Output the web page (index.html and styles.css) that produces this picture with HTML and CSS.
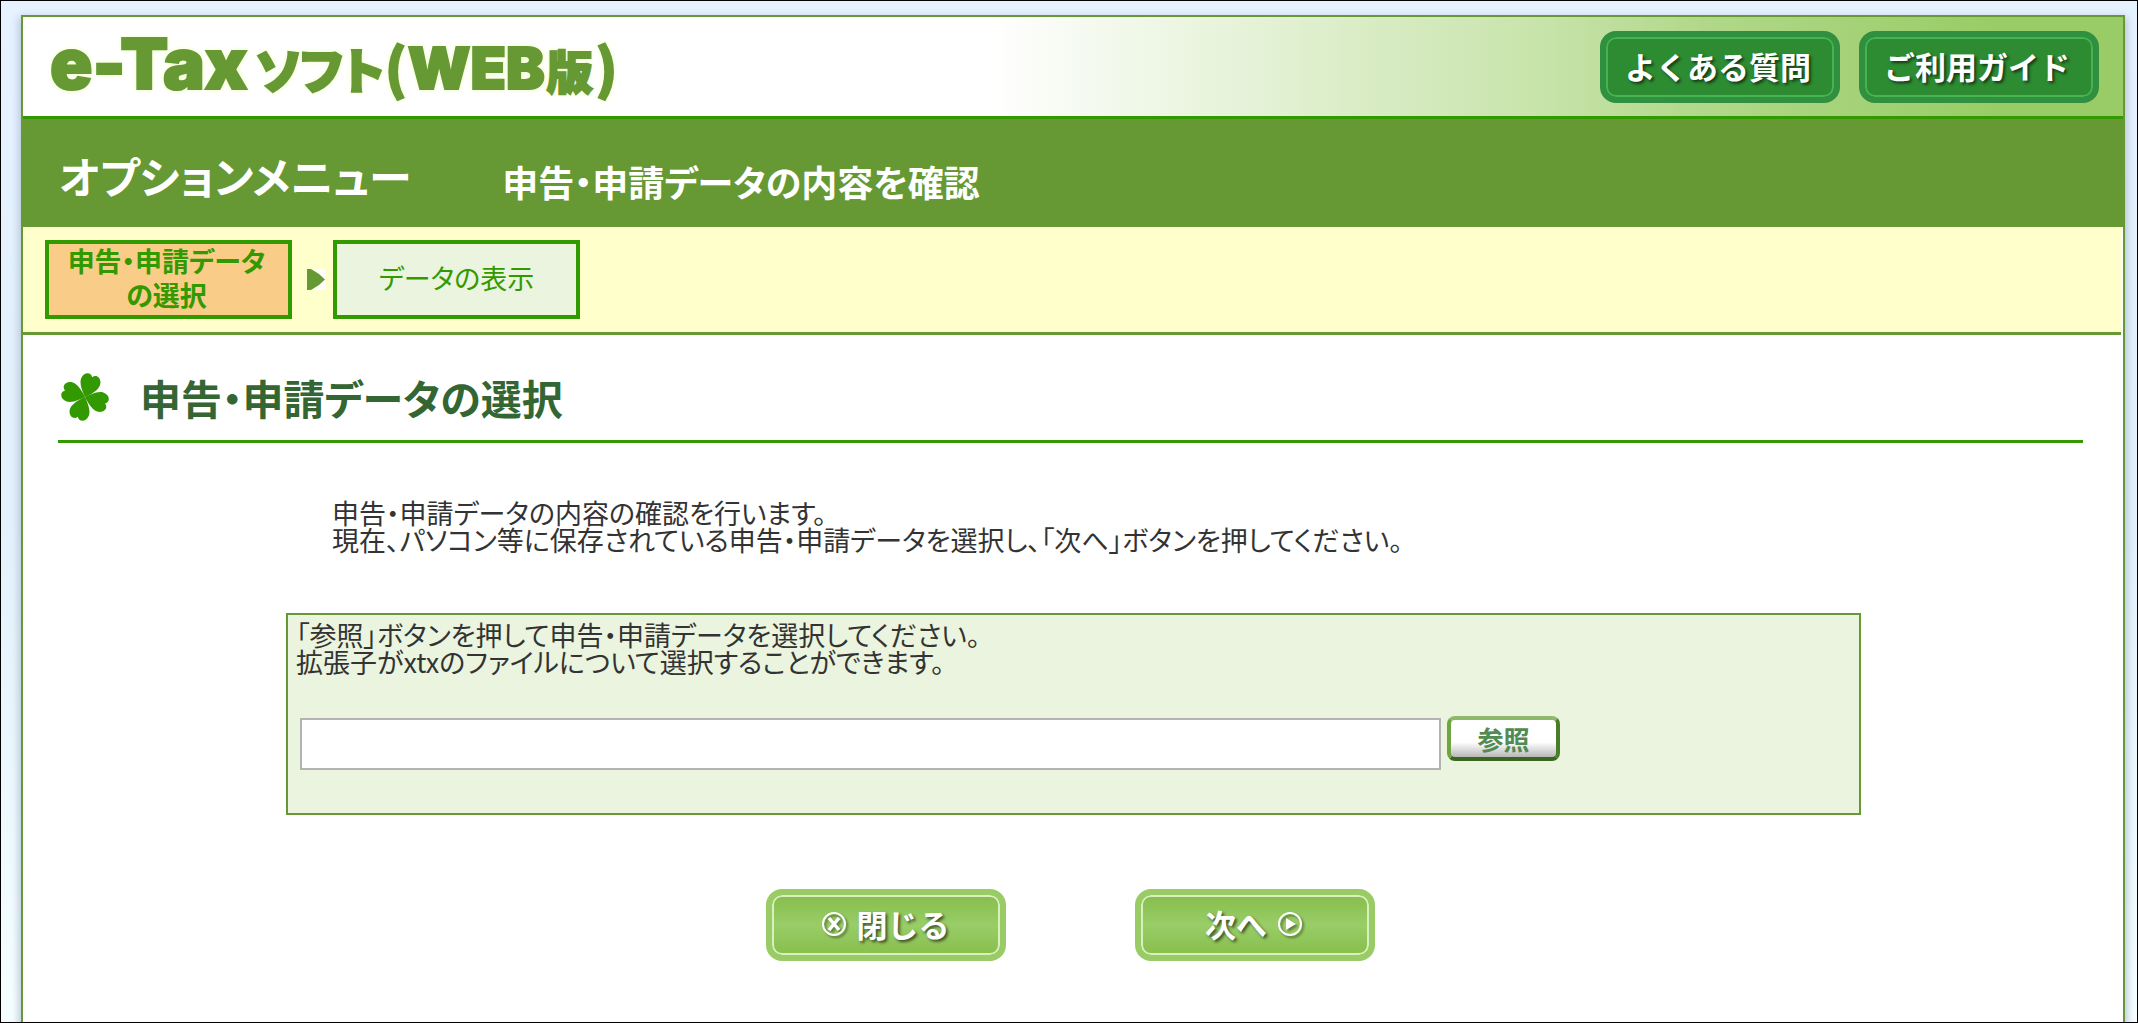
FILE: index.html
```html
<!DOCTYPE html>
<html lang="ja">
<head>
<meta charset="utf-8">
<title>e-Taxソフト(WEB版)</title>
<link rel="stylesheet" href="styles.css">
</head>
<body>
<div class="page">
  <header class="site-header">
    <p class="logo"><span class="logo-tax">e-Tax</span><span class="logo-kana">ソフト</span><span class="logo-paren">(</span><span class="logo-web">WEB</span><span class="logo-kanji">版</span><span class="logo-paren">)</span></p>
    <nav class="help">
      <button type="button" class="pill pill-dark">よくある質問</button>
      <button type="button" class="pill pill-dark">ご利用ガイド</button>
    </nav>
  </header>

  <div class="title-bar">
    <p class="menu-name">オプションメニュー</p>
    <h1 class="task-name">申告・申請データの内容を確認</h1>
  </div>

  <ol class="steps">
    <li class="step step-current">申告・申請データ<br>の選択</li>
    <li class="arrow" aria-hidden="true"><svg width="18" height="21" viewBox="0 0 18 21"><rect width="18" height="21" fill="#fff"/><path d="M0 0H4L12 5L18 10.500L12 16L4 21H0Z" fill="#693"/></svg></li>
    <li class="step">データの表示</li>
  </ol>

  <main class="content">
    <div class="section-head">
      <svg class="clover" width="50" height="50" viewBox="-25 -25 50 50" aria-hidden="true">
        <defs><path id="leaf" d="M0 0C-3-3-10-10-10-16C-10-23-3-26 0-21C3-26 10-23 10-16C10-10 3-3 0 0Z"/></defs>
        <g fill="#390">
          <use href="#leaf" transform="rotate(20)"/>
          <use href="#leaf" transform="rotate(108)"/>
          <use href="#leaf" transform="rotate(200)"/>
          <use href="#leaf" transform="rotate(288)"/>
        </g>
      </svg>
      <h2 class="section-title">申告・申請データの選択</h2>
    </div>

    <p class="intro">申告・申請データの内容の確認を行います。<br>現在、パソコン等に保存されている申告・申請データを選択し、「次へ」ボタンを押してください。</p>

    <form class="panel">
      <label class="panel-text" for="file">「参照」ボタンを押して申告・申請データを選択してください。<br>拡張子がxtxのファイルについて選択することができます。</label>
      <div class="file-row">
        <input class="file-input" id="file" type="text">
        <button type="button" class="browse">参照</button>
      </div>
    </form>

    <div class="actions">
      <button type="button" class="pill pill-light"><svg class="icon" width="26" height="26" viewBox="0 0 26 26" aria-hidden="true"><circle cx="13" cy="13" r="11" fill="none" stroke="#fff" stroke-width="2"/><path d="M8 7L18 19M18 7L8 19" stroke="#fff" stroke-width="3.500"/></svg>閉じる</button>
      <button type="button" class="pill pill-light">次へ<svg class="icon" width="26" height="26" viewBox="0 0 26 26" aria-hidden="true"><circle cx="13" cy="13" r="11" fill="none" stroke="#fff" stroke-width="2"/><path d="M9 7L19 13L9 19Z" fill="#fff"/></svg></button>
    </div>
  </main>
</div>
</body>
</html>
```
FILE: styles.css
```css
* {
  box-sizing: border-box;
}

body {
  margin: 0;
  min-height: 100vh;
  display: flex;
  padding: 14px 12px 0 20px;
  border: 1px solid #000;
  background: linear-gradient(#e6f2ff, #e2f1fc 50%, #f6ffff);
  color: #333;
  font-family: "Noto Sans CJK JP", sans-serif;
  font-feature-settings: "palt";
  font-size: 27px;
  line-height: 27px;
}

p, h1, h2, ol {
  margin: 0;
  padding: 0;
}

button {
  font-family: inherit;
  cursor: pointer;
}

.page {
  flex: 1;
  border: 2px solid #693;
  border-bottom: 0;
  background: #fff;
  box-shadow: 0 4px 8px 2px #b4c3d8;
}

.site-header {
  display: flex;
  align-items: center;
  justify-content: space-between;
  height: 102px;
  padding: 0 24px 0 27px;
  border-bottom: 3px solid #390;
  background: linear-gradient(90deg, #fff 46%, #c8e4ab 72%, #b1d88a 80%, #9c6 94%, #9c6);
}

.logo {
  display: flex;
  align-items: baseline;
  color: #693;
  font-weight: 900;
  line-height: 72px;
  text-shadow: 0 0 4px #ffc, 0 0 6px #efc;
  -webkit-text-stroke: 2px #693;
}

.logo-tax {
  font-family: Inter, sans-serif;
  font-size: 70px;
}

.logo-kana {
  margin-left: 8px;
  font-size: 49px;
}

.logo-paren {
  margin: 0 1px;
  font-size: 54px;
}

.logo-web {
  font-family: Inter, sans-serif;
  font-size: 58px;
}

.logo-kanji {
  margin: 0 2px;
  font-size: 46px;
}

.help {
  display: flex;
  gap: 19px;
}

.pill {
  display: flex;
  align-items: center;
  justify-content: center;
  gap: 10px;
  width: 240px;
  height: 72px;
  padding: 0 4px 2px 0;
  border: 6px solid;
  border-radius: 16px;
  color: #fff;
  font-size: 31px;
  font-weight: 700;
  line-height: 36px;
  text-shadow: 2px 2px 3px rgba(0, 0, 0, .6);
}

.pill-dark {
  border-color: #309040;
  background: #2d8c32;
  box-shadow: inset 0 0 0 2px #46b450;
}

.pill-light {
  padding-right: 2px;
  border-color: #9c6;
  background: linear-gradient(#87be4b, #99cd68 50%, #87be4b);
  box-shadow: inset 0 0 0 2px #d8f0bc;
}

.icon {
  filter: drop-shadow(2px 2px 1px rgba(0, 0, 0, .4));
}

.title-bar {
  display: flex;
  align-items: flex-start;
  gap: 91px;
  height: 108px;
  padding: 32px 36px 0;
  background: #693;
  color: #fff;
}

.menu-name {
  font-size: 43px;
  font-weight: 700;
  line-height: 48px;
}

.task-name {
  font-size: 36px;
  font-weight: 700;
  line-height: 60px;
}

.steps {
  display: flex;
  align-items: center;
  height: 108px;
  margin-right: 2px;
  padding: 0 22px;
  border-bottom: 3px solid #693;
  background: #ffc;
  color: #390;
  list-style: none;
}

.step {
  display: flex;
  align-items: center;
  justify-content: center;
  width: 247px;
  height: 79px;
  padding-bottom: 4px;
  border: 4px solid #390;
  background: #eaf4de;
  line-height: 34px;
  text-align: center;
}

.step-current {
  padding-right: 4px;
  background: #f9cc88;
  font-weight: 700;
}

.arrow {
  display: flex;
  margin: 0 8px 0 15px;
}

.content {
  padding: 32px 40px 48px 35px;
}

.section-head {
  display: flex;
  align-items: center;
  gap: 30px;
  height: 76px;
  padding: 0 0 14px 2px;
  border-bottom: 3px solid #390;
}

.section-title {
  color: #363;
  font-size: 41px;
  font-weight: 700;
  line-height: 48px;
}

.intro {
  margin: 56px 0 60px 274px;
}

.panel {
  margin: 0 222px 0 228px;
  padding: 6px 8px 43px;
  border: 2px solid #693;
  background: #eaf4de;
}

.panel-text {
  display: block;
}

.file-row {
  display: flex;
  align-items: flex-start;
  gap: 6px;
  margin-top: 41px;
  padding: 0 291px 0 4px;
}

.file-input {
  flex: 1;
  height: 52px;
  margin-top: 2px;
  padding: 0 8px;
  border: 2px solid #b3b3b3;
  background: #fff;
  font: inherit;
}

.browse {
  width: 113px;
  height: 45px;
  padding: 0;
  border: 4px solid;
  border-color: #8fb96a #4a7d28 #3c6620 #70a440;
  border-radius: 8px;
  background: linear-gradient(#fff 60%, #b8b8b8);
  color: #528a52;
  font-size: 26px;
  font-weight: 700;
  line-height: 30px;
}

.actions {
  display: flex;
  justify-content: center;
  gap: 129px;
  margin-top: 74px;
}
```
